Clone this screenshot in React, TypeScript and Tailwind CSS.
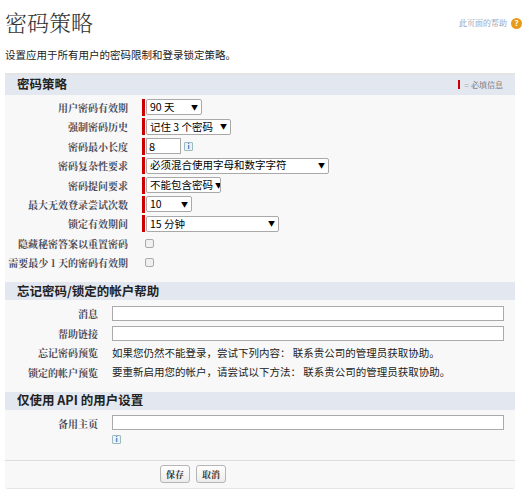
import React from "react";

const cjk = { fontFamily: '"Noto Sans CJK SC", "Noto Sans", sans-serif' };
const serif = { fontFamily: '"Noto Serif CJK SC", "Liberation Serif", "Noto Sans CJK SC", serif' };

function Sel({ w, v }: { w: number; v: string }) {
  return (
    <div className="flex items-center">
      <div className="w-[3px] h-[17px] bg-[#c00] mr-[1px]" />
      <div className="h-[16px] border border-[#a9a9a9] rounded-[2px] bg-white flex items-center justify-between px-[3px] text-[10.5px] leading-none whitespace-nowrap text-black overflow-hidden" style={{ width: w }}>
        <span>{v}</span>
        <span className="text-[7px] ml-[2px]">▼</span>
      </div>
    </div>
  );
}

function Info() {
  return <span className="inline-flex items-center justify-center w-[9px] h-[9px] border border-[#9bb] bg-[#eaf2fa] text-[#2a6fbf] text-[7px] font-bold rounded-[1px] leading-none">i</span>;
}

function Row({ label, children, lw = 123 }: { label: string; children: React.ReactNode; lw?: number }) {
  return (
    <div className="flex items-center h-[19.4px]">
      <div className="text-right text-[10px] text-[#4a4a56] font-bold pr-[14px] shrink-0 whitespace-nowrap" style={{ width: lw + 14, ...serif }}>{label}</div>
      {children}
    </div>
  );
}

function Chk() {
  return <div className="ml-[3px] w-[9px] h-[9px] border border-[#aaa] rounded-[2px] bg-[#f0f0f0]" />;
}

export default function App() {
  return (
    <div className="w-[530px] h-[500px] bg-white relative" style={cjk}>
      <div className="flex justify-between items-start px-[5px] pt-[8px]">
        <div className="text-[22px] text-[#333] font-light leading-[28px]" style={serif}>密码策略</div>
        <div className="flex items-center gap-[4px] mt-[9px] mr-[3px]">
          <span className="text-[8px] text-[#8a8fa8]" style={serif}>此页面的帮助</span>
          <span className="w-[11px] h-[11px] rounded-full bg-[#e69b1a] text-white text-[8px] font-bold flex items-center justify-center">?</span>
        </div>
      </div>
      <div className="px-[5px] mt-[11px] text-[10.5px] text-[#222]">设置应用于所有用户的密码限制和登录锁定策略。</div>
      <div className="mx-[5px] mt-[10px] w-[510px] border-t-[2px] border-[#5b6a85] bg-[#f8f8f8] rounded-b-[3px] border-b border-[#e4e4e4]">
        <div className="bg-[#e3e7ef] h-[20px] flex items-center justify-between px-[12px]">
          <span className="text-[12.5px] font-bold text-[#222]">密码策略</span>
          <span className="flex items-center gap-[4px] text-[8px] text-[#666]" style={serif}><span className="w-[2px] h-[9px] bg-[#c00]" />= 必填信息</span>
        </div>
        <div className="pt-[3px] pb-[10px]">
          <Row label="用户密码有效期"><Sel w={56} v="90 天" /></Row>
          <Row label="强制密码历史"><Sel w={85} v="记住 3 个密码" /></Row>
          <Row label="密码最小长度">
            <div className="flex items-center">
              <div className="w-[3px] h-[17px] bg-[#c00] mr-[1px]" />
              <div className="w-[35px] h-[16px] border border-[#a9a9a9] bg-white text-[11px] px-[2px] leading-[14px]">8</div>
              <span className="ml-[3px] flex items-center"><Info /></span>
            </div>
          </Row>
          <Row label="密码复杂性要求"><Sel w={183} v="必须混合使用字母和数字字符" /></Row>
          <Row label="密码提问要求"><Sel w={75} v="不能包含密码" /></Row>
          <Row label="最大无效登录尝试次数"><Sel w={46} v="10" /></Row>
          <Row label="锁定有效期间"><Sel w={133} v="15 分钟" /></Row>
          <Row label="隐藏秘密答案以重置密码"><Chk /></Row>
          <Row label="需要最少 1 天的密码有效期"><Chk /></Row>
        </div>
        <div className="bg-[#e3e7ef] h-[18px] flex items-center px-[12px]">
          <span className="text-[12.5px] font-bold text-[#222]">忘记密码/锁定的帐户帮助</span>
        </div>
        <div className="pt-[4px] pb-[10px]">
          {["消息", "帮助链接"].map((l) => (
            <Row key={l} label={l} lw={93}><div className="w-[392px] h-[15px] border border-[#aaa] bg-white" /></Row>
          ))}
          <Row label="忘记密码预览" lw={93}><span className="text-[10.5px] text-[#222] whitespace-nowrap">如果您仍然不能登录，尝试下列内容： 联系贵公司的管理员获取协助。</span></Row>
          <Row label="锁定的帐户预览" lw={93}><span className="text-[10.5px] text-[#222] whitespace-nowrap">要重新启用您的帐户，请尝试以下方法： 联系贵公司的管理员获取协助。</span></Row>
        </div>
        <div className="bg-[#e3e7ef] h-[18px] flex items-center px-[12px]">
          <span className="text-[12.5px] font-bold text-[#222]">仅使用 API 的用户设置</span>
        </div>
        <div className="pt-[5px] pb-[16px]">
          <div className="flex items-start">
            <div className="text-right text-[10px] text-[#4a4a56] font-bold pr-[14px] pt-[1px]" style={{ width: 107, ...serif }}>备用主页</div>
            <div className="flex flex-col gap-[5px]">
              <div className="w-[392px] h-[15px] border border-[#aaa] bg-white" />
              <Info />
            </div>
          </div>
        </div>
        <div className="border-t border-[#ddd] h-[28px] flex items-center gap-[6px] pl-[155px]">
          {["保存", "取消"].map((b) => (
            <div key={b} className="h-[18px] px-[5px] border border-[#b5b5b5] rounded-[3px] bg-gradient-to-b from-white to-[#ececec] text-[9px] font-bold text-[#333] flex items-center" style={serif}>{b}</div>
          ))}
        </div>
      </div>
    </div>
  );
}
